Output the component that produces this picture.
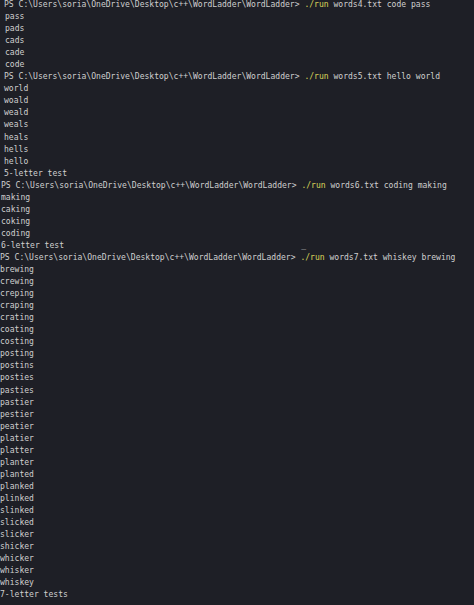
const prompt = "PS C:\\Users\\soria\\OneDrive\\Desktop\\c++\\WordLadder\\WordLadder> ";

type Line = { text?: string; cmd?: string; indent: string };

const lines: Line[] = [
  { cmd: " words4.txt code pass", indent: "pl-[4px]" },
  ...["pass", "pads", "cads", "cade", "code"].map((t) => ({ text: t, indent: "pl-[5px]" })),
  { cmd: " words5.txt hello world", indent: "pl-[4px]" },
  ...["world", "woald", "weald", "weals", "heals", "hells", "hello"].map((t) => ({ text: t, indent: "pl-[4px]" })),
  { text: "5-letter test", indent: "pl-[4px]" },
  { cmd: " words6.txt coding making", indent: "pl-[1px]" },
  ...["making", "caking", "coking", "coding"].map((t) => ({ text: t, indent: "pl-[1px]" })),
  { text: "6-letter test                                                 _", indent: "pl-[1px]" },
  { cmd: " words7.txt whiskey brewing", indent: "pl-0" },
  ...[
    "brewing", "crewing", "creping", "craping", "crating", "coating", "costing", "posting",
    "postins", "posties", "pasties", "pastier", "pestier", "peatier", "platier", "platter",
    "planter", "planted", "planked", "plinked", "slinked", "slicked", "slicker", "shicker",
    "whicker", "whisker", "whiskey",
  ].map((t) => ({ text: t, indent: "pl-0" })),
  { text: "7-letter tests", indent: "pl-0" },
];

export default function App() {
  return (
    <div className="w-[474px] h-[605px] overflow-hidden bg-[#1e1f26] text-[#cfcfcf]">
      <div className="-mt-[1px] font-['DejaVu_Sans_Mono',monospace] text-[8.05px] leading-[12.05px] whitespace-pre">
        {lines.map((l, i) => (
          <div key={i} className={l.indent}>
            {l.cmd ? (
              <>
                {prompt}
                <span className="text-[#dcd65a]">./run</span>
                {l.cmd}
              </>
            ) : (
              l.text
            )}
          </div>
        ))}
      </div>
    </div>
  );
}
